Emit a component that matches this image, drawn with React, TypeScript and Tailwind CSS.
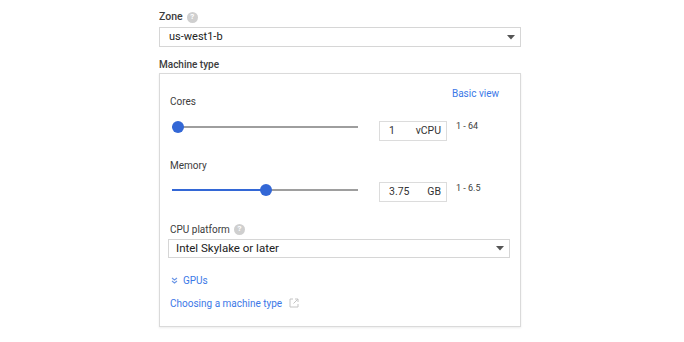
const HelpIcon = () => (
  <span className="ml-[4px] inline-flex h-[11px] w-[11px] items-center justify-center rounded-full bg-[#cfcfcf] text-[8px] font-bold leading-none text-white">
    ?
  </span>
);

const Caret = () => (
  <svg width="8" height="5" viewBox="0 0 8 5" className="shrink-0">
    <path d="M0 0h8L4 4.5z" fill="#555" />
  </svg>
);

const Slider = ({ value }: { value: number }) => (
  <div className="relative h-[14px] w-[190px] shrink-0">
    <div className="absolute left-[2px] top-[6px] h-[2px] w-[186px] bg-[#9e9e9e]" />
    <div className="absolute left-[2px] top-[6px] h-[2px] bg-[#3367d6]" style={{ width: `${value * 186}px` }} />
    <div
      className="absolute top-[1px] h-[12px] w-[12px] rounded-full bg-[#3367d6]"
      style={{ left: `${2 + value * 174}px` }}
    />
  </div>
);

const NumberBox = ({ value, unit }: { value: string; unit: string }) => (
  <div className="ml-[19px] flex h-[20px] w-[68px] shrink-0 items-center justify-between border border-[#dcdcdc] pl-[9px] pr-[5px] text-[10.5px] text-[#333]">
    <span>{value}</span>
    <span>{unit}</span>
  </div>
);

export default function App() {
  return (
    <div className="min-h-screen bg-white pl-[159px] pt-[9px] font-['Roboto',sans-serif] text-[10px] text-[#3c3c3c]">
      <div className="flex h-[16px] items-center text-[10.5px] font-medium">
        Zone
        <HelpIcon />
      </div>
      <div className="mt-[2px] flex h-[20px] w-[362px] items-center justify-between border border-[#d6d6d6] pl-[9px] pr-[5px] text-[11px] text-[#212121]">
        <span>us-west1-b</span>
        <Caret />
      </div>
      <div className="mt-[9px] flex h-[16px] items-center font-medium">Machine type</div>

      <div className="mt-[1px] w-[362px] border border-[#dadada] pb-[15px] pl-[10px] shadow-[0_1px_2px_rgba(0,0,0,0.08)]">
        <div className="flex items-start justify-between pt-[12px]">
          <span className="mt-[8px] leading-[16px]">Cores</span>
          <span className="mr-[21px] leading-[16px] text-[#3b78e7]">Basic view</span>
        </div>
        <div className="mt-[10px] flex items-start">
          <Slider value={0} />
          <div className="mt-[1px]">
            <NumberBox value="1" unit="vCPU" />
          </div>
          <span className="ml-[9px] text-[9px] leading-[13px]">1 - 64</span>
        </div>

        <div className="mt-[17px] leading-[16px]">Memory</div>
        <div className="mt-[8px] flex items-start">
          <div className="mt-[1px]">
            <Slider value={0.505} />
          </div>
          <NumberBox value="3.75" unit="GB" />
          <span className="ml-[9px] text-[9px] leading-[13px]">1 - 6.5</span>
        </div>

        <div className="mt-[19px] flex h-[16px] items-center">
          CPU platform
          <HelpIcon />
        </div>
        <div className="-ml-[2px] mt-[2px] flex h-[19px] w-[342px] items-center justify-between border border-[#d6d6d6] pl-[7px] pr-[5px] text-[11.5px] text-[#212121]">
          <span>Intel Skylake or later</span>
          <Caret />
        </div>

        <div className="mt-[14px] flex h-[16px] items-center text-[#3b78e7]">
          <svg width="7" height="7" viewBox="0 0 7 7" className="ml-[1px] mr-[5px]">
            <path d="M1 1l2.5 2 2.5-2M1 4l2.5 2 2.5-2" stroke="#6b96e6" strokeWidth="1.1" fill="none" />
          </svg>
          GPUs
        </div>
        <div className="mt-[7px] flex h-[16px] items-center text-[#3b78e7]">
          Choosing a machine type
          <svg width="10" height="10" viewBox="0 0 10 10" className="ml-[7px]">
            <path d="M4 1H1v8h8V6M6 1h3v3M9 1L4.5 5.5" stroke="#c4c4c4" strokeWidth="1" fill="none" />
          </svg>
        </div>
      </div>
    </div>
  );
}
